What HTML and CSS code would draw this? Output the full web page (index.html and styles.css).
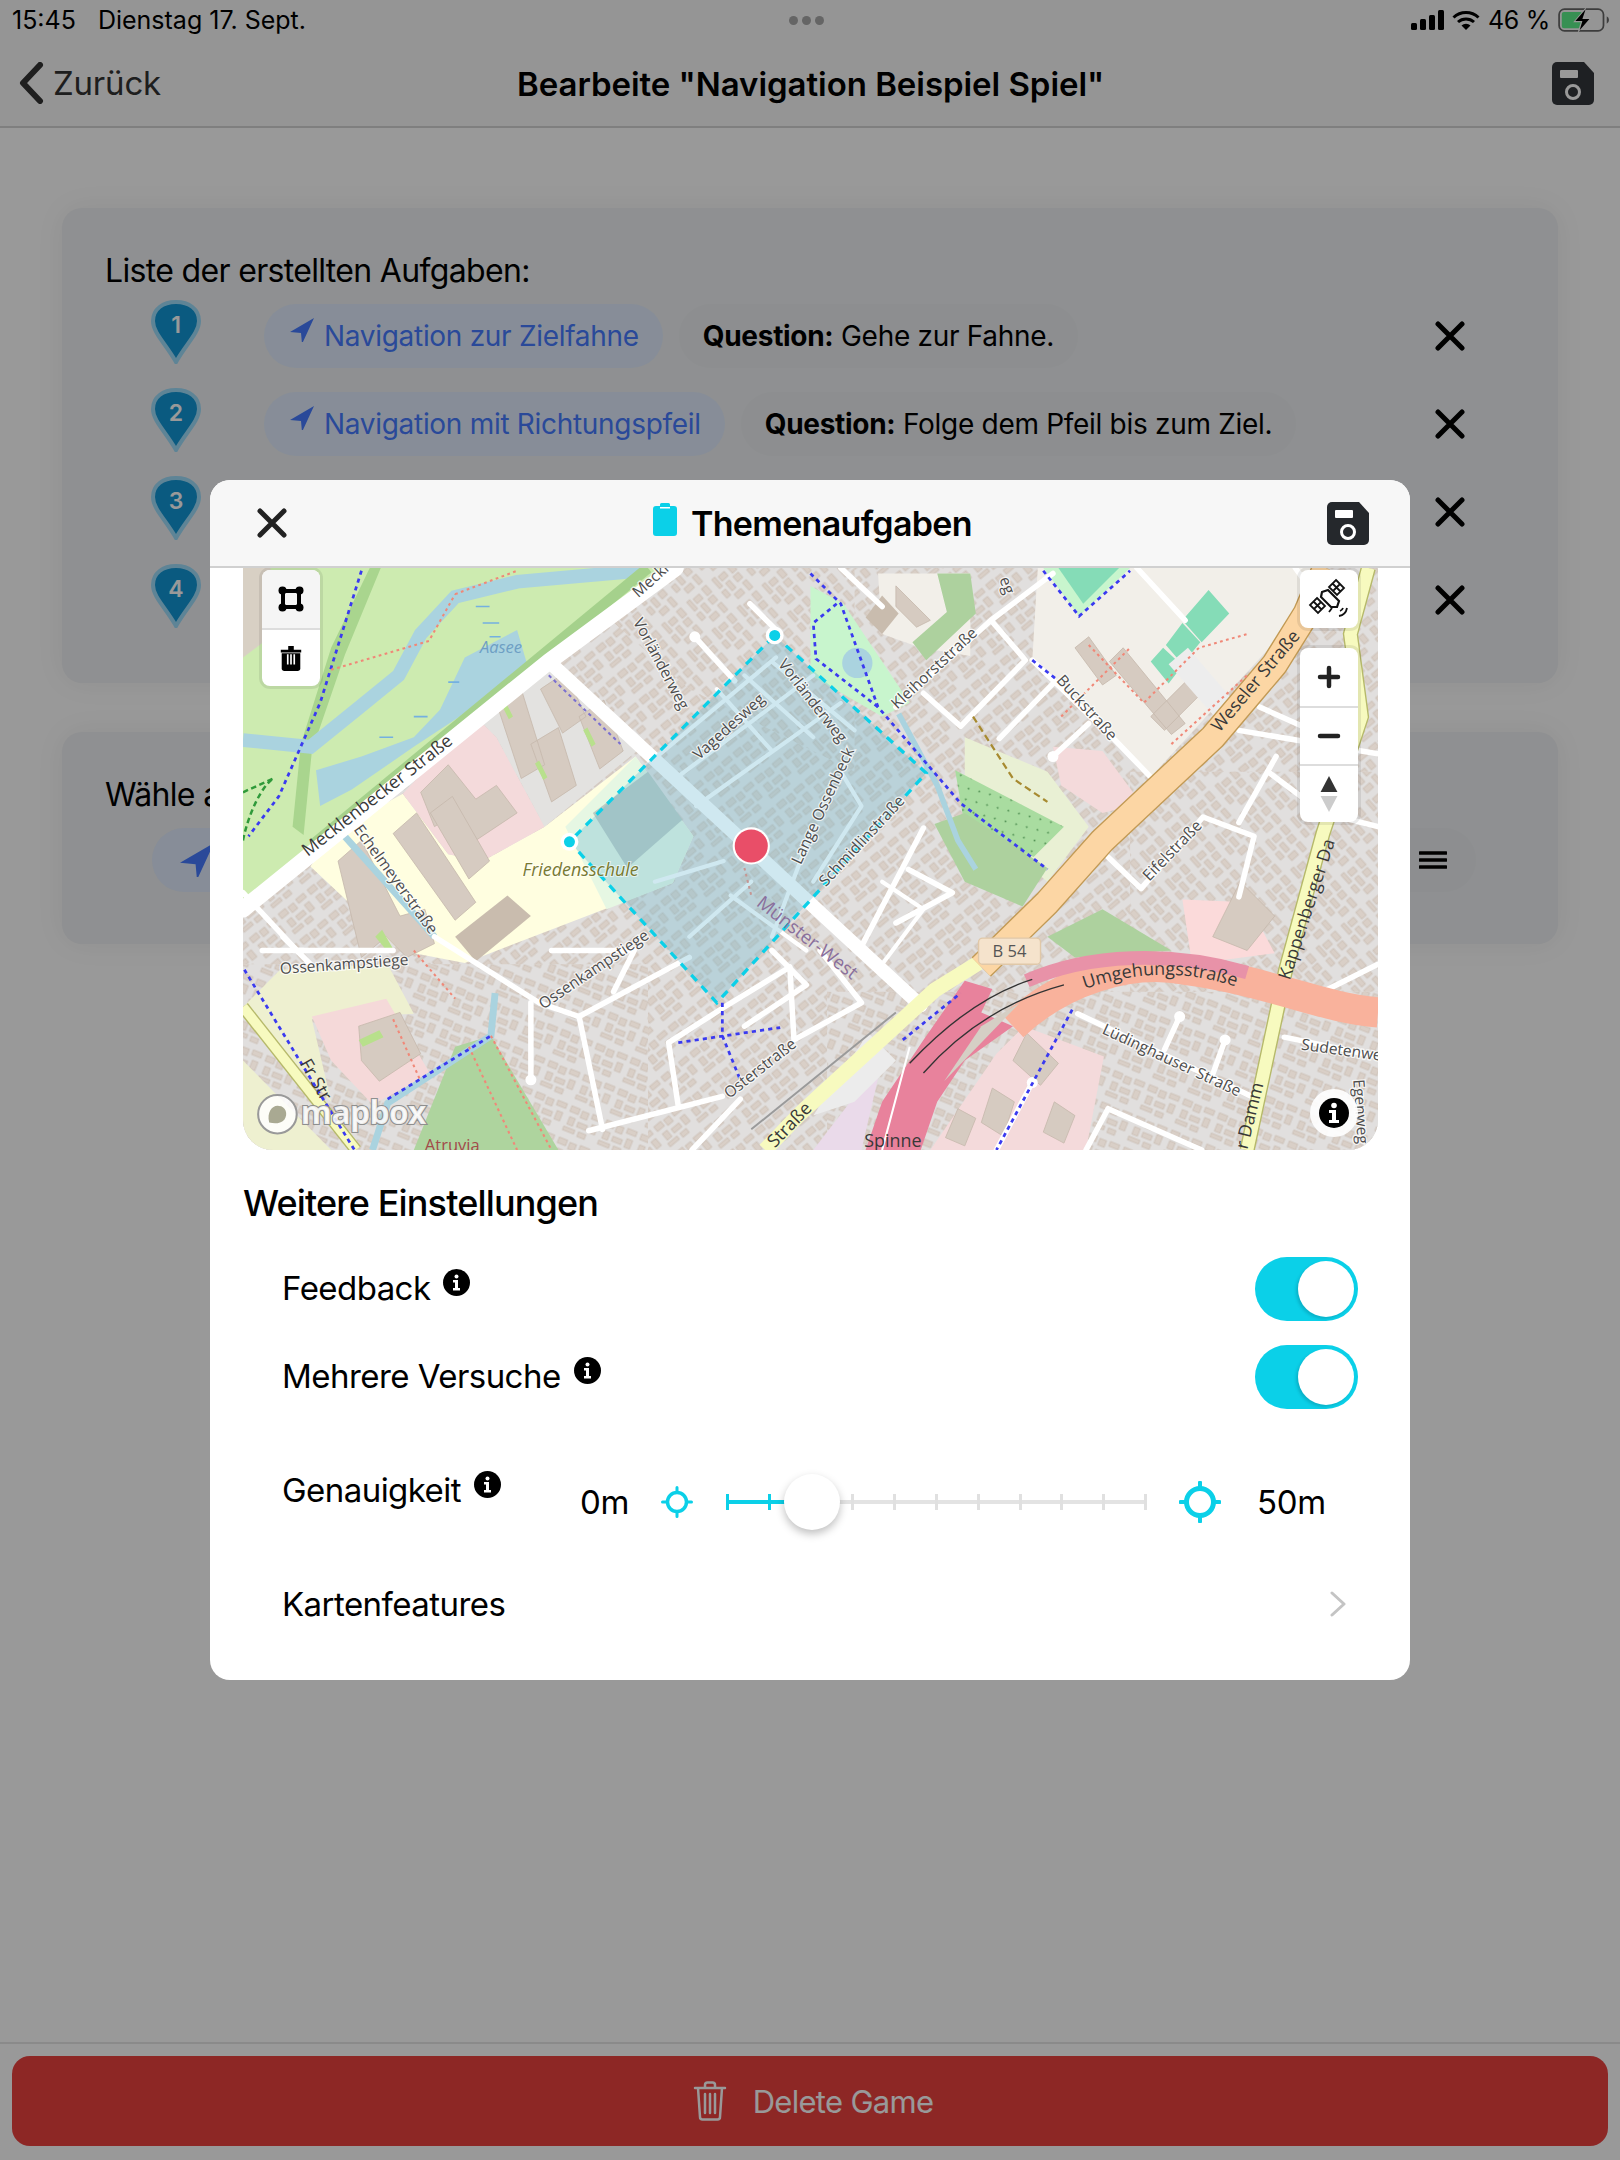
FILE: index.html
```html
<!DOCTYPE html>
<html lang="de">
<head>
<meta charset="utf-8">
<title>Bearbeite Spiel</title>
<link rel="stylesheet" href="styles.css">
</head>
<body>
<div class="app">
  <header class="status">
    <div class="status-left"><span>15:45</span><span>Dienstag 17. Sept.</span></div>
    <div class="dots"><i></i><i></i><i></i></div>
    <div class="status-right">
      <svg class="sig" viewBox="0 0 33 20"><rect x="0" y="13" width="6" height="7" rx="1.5"/><rect x="9" y="9" width="6" height="11" rx="1.5"/><rect x="18" y="5" width="6" height="15" rx="1.5"/><rect x="27" y="0" width="6" height="20" rx="1.5"/></svg>
      <svg class="wifi" viewBox="0 0 28 20"><path d="M1.5 7.5a18 18 0 0 1 25 0" fill="none" stroke="#000" stroke-width="3"/><path d="M6 12a12 12 0 0 1 16 0" fill="none" stroke="#000" stroke-width="3"/><path d="M14 20l-4.5-4.5a6.4 6.4 0 0 1 9 0z"/></svg>
      <span class="pct">46 %</span>
      <svg class="batt" viewBox="0 0 48 24"><rect x="1" y="2" width="41" height="20" rx="5" fill="none" stroke="#666" stroke-width="1.6"/><rect x="3.5" y="4.5" width="19" height="15" rx="2" fill="#5cf08a"/><path d="M45 8.500a4 4 0 0 1 0 7z" fill="#666"/><path d="M26 0L14 14h7l-3 10L31 10h-7z" fill="#fff"/><path d="M25.500 2L16 13h6.500l-2.500 8.500L29 11h-6.500z"/></svg>
    </div>
  </header>
  <nav class="nav">
    <div class="back">
      <svg class="back-ico" viewBox="0 0 26 42"><path d="M22 3L5 21l17 18" fill="none" stroke="#333" stroke-width="6" stroke-linecap="round" stroke-linejoin="round"/></svg>
      <span>Zurück</span>
    </div>
    <h1 class="nav-title">Bearbeite "Navigation Beispiel Spiel"</h1>
    <svg class="save nav-save" viewBox="0 0 42 43"><path d="M5 0h27l10 11v27a5 5 0 0 1-5 5H5a5 5 0 0 1-5-5V5a5 5 0 0 1 5-5z" fill="#33363b"/><rect x="8" y="8" width="18" height="8" rx="1" fill="#fff"/><circle cx="21" cy="30" r="6.500" fill="none" stroke="#fff" stroke-width="3"/></svg>
  </nav>

  <main class="main">
    <section class="card card-list">
      <h2 class="card-title">Liste der erstellten Aufgaben:</h2>
      <div class="row">
        <svg class="pin" viewBox="0 0 50 64"><path d="M25 62C15 44 2 33 2 21C2 9 12 2 25 2s23 7 23 19c0 12-13 23-23 41z" fill="#1196d5" stroke="#9ddcfa" stroke-width="4"/><text x="25" y="33" class="pin-num">1</text></svg>
        <div class="chips">
          <span class="chip chip-type"><svg class="nav-arrow" viewBox="0 0 24 24"><path d="M24 0L0 14l11 1 1 11z"/></svg>Navigation zur Zielfahne</span>
          <span class="chip chip-q"><b>Question:</b> Gehe zur Fahne.</span>
        </div>
        <svg class="x" viewBox="0 0 30 30"><path d="M3 3l24 24M27 3L3 27" stroke="#000" stroke-width="5" stroke-linecap="round"/></svg>
      </div>
      <div class="row">
        <svg class="pin" viewBox="0 0 50 64"><path d="M25 62C15 44 2 33 2 21C2 9 12 2 25 2s23 7 23 19c0 12-13 23-23 41z" fill="#1196d5" stroke="#9ddcfa" stroke-width="4"/><text x="25" y="33" class="pin-num">2</text></svg>
        <div class="chips">
          <span class="chip chip-type"><svg class="nav-arrow" viewBox="0 0 24 24"><path d="M24 0L0 14l11 1 1 11z"/></svg>Navigation mit Richtungspfeil</span>
          <span class="chip chip-q"><b>Question:</b> Folge dem Pfeil bis zum Ziel.</span>
        </div>
        <svg class="x" viewBox="0 0 30 30"><path d="M3 3l24 24M27 3L3 27" stroke="#000" stroke-width="5" stroke-linecap="round"/></svg>
      </div>
      <div class="row">
        <svg class="pin" viewBox="0 0 50 64"><path d="M25 62C15 44 2 33 2 21C2 9 12 2 25 2s23 7 23 19c0 12-13 23-23 41z" fill="#1196d5" stroke="#9ddcfa" stroke-width="4"/><text x="25" y="33" class="pin-num">3</text></svg>
        <div class="chips"></div>
        <svg class="x" viewBox="0 0 30 30"><path d="M3 3l24 24M27 3L3 27" stroke="#000" stroke-width="5" stroke-linecap="round"/></svg>
      </div>
      <div class="row">
        <svg class="pin" viewBox="0 0 50 64"><path d="M25 62C15 44 2 33 2 21C2 9 12 2 25 2s23 7 23 19c0 12-13 23-23 41z" fill="#1196d5" stroke="#9ddcfa" stroke-width="4"/><text x="25" y="33" class="pin-num">4</text></svg>
        <div class="chips"></div>
        <svg class="x" viewBox="0 0 30 30"><path d="M3 3l24 24M27 3L3 27" stroke="#000" stroke-width="5" stroke-linecap="round"/></svg>
      </div>
    </section>

    <section class="card card-choose">
      <h2 class="card-title">Wähle aus</h2>
      <div class="pick">
        <svg class="pick-arrow" viewBox="0 0 24 24"><path d="M24 0L0 14l11 1 1 11z"/></svg>
        <svg class="burger" viewBox="0 0 28 18"><path d="M1 2h26M1 9h26M1 16h26" stroke="#000" stroke-width="3.400" stroke-linecap="round"/></svg>
      </div>
    </section>
  </main>

  <footer class="footer">
    <button class="delete">
      <svg class="trash-ico" viewBox="0 0 34 40"><path d="M2 7h30M12 7V4a2.500 2.500 0 0 1 2.500-2.500h5A2.500 2.500 0 0 1 22 4v3M5 7l2 29a2.500 2.500 0 0 0 2.500 2.500h15A2.500 2.500 0 0 0 27 36l2-29M12 13v19M17 13v19M22 13v19" fill="none" stroke="#fff" stroke-width="2.500" stroke-linecap="round"/></svg>
      <span>Delete Game</span>
    </button>
  </footer>

  <div class="overlay">
    <div class="modal">
      <div class="modal-head">
        <svg class="x modal-x" viewBox="0 0 30 30"><path d="M3 3l24 24M27 3L3 27" stroke="#222" stroke-width="5" stroke-linecap="round"/></svg>
        <div class="modal-title">
          <svg class="clip-ico" viewBox="0 0 24 33"><path d="M3 3h4V1.500A1.500 1.500 0 0 1 8.500 0h7A1.500 1.500 0 0 1 17 1.500V3h4a3 3 0 0 1 3 3v24a3 3 0 0 1-3 3H3a3 3 0 0 1-3-3V6a3 3 0 0 1 3-3z" fill="#0bd0e8"/><rect x="7" y="4" width="10" height="1.500" fill="#fff"/></svg>
          <span>Themenaufgaben</span>
        </div>
        <svg class="save" viewBox="0 0 42 43"><path d="M5 0h27l10 11v27a5 5 0 0 1-5 5H5a5 5 0 0 1-5-5V5a5 5 0 0 1 5-5z" fill="#25282c"/><rect x="8" y="8" width="18" height="8" rx="1" fill="#fff"/><circle cx="21" cy="30" r="6.500" fill="none" stroke="#fff" stroke-width="3"/></svg>
      </div>

      <div class="map">
        <svg class="map-art" viewBox="176 412 824 423" preserveAspectRatio="none">
          <defs>
            <g id="blocks" fill="#d9cfc7" stroke="#cabeb4" stroke-width=".8">
              <rect x="2" y="2" width="9" height="6"/><rect x="14" y="3" width="7" height="7"/><rect x="25" y="2" width="10" height="5"/>
              <rect x="4" y="13" width="6" height="8"/><rect x="14" y="15" width="10" height="5"/><rect x="28" y="12" width="6" height="9"/>
              <rect x="2" y="24" width="12" height="4"/><rect x="18" y="24" width="8" height="5"/>
            </g>
            <pattern id="b1" width="38" height="34" patternUnits="userSpaceOnUse" patternTransform="rotate(-40) scale(.72)"><use href="#blocks"/></pattern>
            <pattern id="b2" width="38" height="34" patternUnits="userSpaceOnUse" patternTransform="rotate(22) scale(.72)"><use href="#blocks"/></pattern>
            <pattern id="b3" width="38" height="34" patternUnits="userSpaceOnUse" patternTransform="rotate(48) scale(.72)"><use href="#blocks"/></pattern>
            <pattern id="dots" width="8" height="8" patternUnits="userSpaceOnUse" patternTransform="rotate(15)">
              <rect width="8" height="8" fill="#a9dca0"/><circle cx="3" cy="3" r=".7" fill="#4f8f52"/>
            </pattern>
            <path id="umg" d="M787 718 Q850 696 909 721"/>
          </defs>

          <rect x="176" y="412" width="824" height="423" fill="#e1dfde"/>
          <rect x="176" y="412" width="824" height="423" fill="url(#b1)"/>
          <path d="M176 700H470V835H176zM600 720H1000V835H600z" fill="#e1dfde"/>
          <path d="M176 700H470V835H176zM600 720H1000V835H600z" fill="url(#b2)"/>
          <path d="M400 412H620V560L500 500zM820 560H1000V720H820z" fill="#e1dfde"/>
          <path d="M400 412H620V560L500 500zM820 560H1000V720H820z" fill="url(#b3)"/>

          <!-- land use -->
          <path d="M176 412H490L398 480L176 662z" fill="#cdebb0"/>
          <path d="M176 412h20v50l-20 15z" fill="#d8d0c4"/>
          <path d="M268 412L240 470L218 540L212 600L220 606L226 545L250 475L276 412z" fill="#a9d58e"/>
          <path d="M225 629L240 605L292 576L325 620L350 625L395 600L461 549L503 607L488 641L337 699L290 690z" fill="#fffee0"/>
          <path d="M292 576L345 520L360 535L395 600L350 625L325 620z" fill="#f4dadb"/>
          <path d="M345 520L398 482L462 545L395 600L360 535z" fill="#e3e2e0"/>
          <path d="M461 549L503 607L488 641L440 660L410 600z" fill="#e6f7e3"/>
          <path d="M203 704L281 700L300 736L226 740L240 800L176 731z" fill="#eef0d0"/>
          <path d="M226 738L280 725L312 780L270 802L240 770z" fill="#f5d9d9"/>
          <path d="M176 770L240 835H176z" fill="#eef0d0"/>
          <path d="M330 760L356 752L405 835H300z" fill="#aed49e"/>
          <path d="M753 412L749 479L835 564L944 445L955 412z" fill="#f2efe9"/>
          <path d="M757 412H820L783 447z" fill="#c8f5cd"/>
          <path d="M768 412H812L786 438z" fill="#85dcb7"/>
          <path d="M877 428L892 445L872 466L858 450zM858 452L871 466L858 482L846 468zM844 470L858 483L848 496L835 480z" fill="#85dcb7"/>
          <path d="M637 416H704V476L668 470L640 460z" fill="#f2efe9"/>
          <path d="M680 416H704L708 445L672 479L662 466L687 444z" fill="#add19e"/>
          <path d="M640 432L652 445L640 460L628 448z" fill="#c9bcae"/>
          <path d="M588 425L612 438L660 510L640 520L588 490z" fill="#c8f5cd"/>
          <circle cx="622" cy="481" r="11" fill="#aad3df"/>
          <path d="M700 535L760 560L790 600L760 640L700 590z" fill="#e9f0d4"/>
          <path d="M693 559L772 600L750 622L700 600z" fill="url(#dots)"/>
          <path d="M678 598L700 590L760 630L742 658L700 640z" fill="#add19e"/>
          <path d="M764 542L800 545L828 583L800 590L770 570z" fill="#f4dadb"/>
          <path d="M858 653L905 655L925 692L865 700z" fill="#fbdada"/>
          <path d="M800 660L850 690L780 695L760 680z" fill="#add19e"/>
          <path d="M743 745L801 767L788 835H675L723 765z" fill="#f4dadb"/>
          <path d="M590 835L640 770L625 835z" fill="#eadaea"/>
          <path d="M630 750L650 770L620 800L590 810z" fill="#ececec"/>

          <!-- buildings -->
          <g fill="#d6cbc1" stroke="#c6b9ad" stroke-width=".6">
            <path d="M360 510L378 500L395 555L378 565zM385 540L405 528L418 570L400 582zM420 520L438 508L452 545L435 558zM392 500L410 488L425 520L408 532z"/>
            <path d="M305 575L325 555L345 580L360 570L375 590L345 610L330 590L315 600z"/>
            <path d="M245 625L262 610L290 665L308 660L315 685L295 695L280 680L262 695z"/>
            <path d="M285 605L302 590L345 655L330 668zM312 590L328 578L355 625L340 638z"/>
            <path d="M790 462L810 490L800 497L780 470zM815 470L860 525L850 533L805 480zM835 520L865 490L875 500L845 530z"/>
            <path d="M900 640L925 665L905 690L880 680z"/>
            <path d="M745 750L768 772L755 788L735 770zM720 790L736 800L728 825L712 815zM765 800L780 810L772 830L757 822zM695 805L708 812L700 832L686 826z"/>
            <path d="M260 745L290 735L305 765L275 785L262 770z"/>
            <path d="M650 440L665 455L675 450L650 425z"/>
          </g>
          <path d="M862 470L905 520L890 530L848 482z" fill="#ededed"/>
          <path d="M430 590L470 560L495 595L455 630z" fill="#bccbc3"/>
          <path d="M330 680L368 650L385 665L345 698z" fill="#c9bcae"/>
          <path d="M366 508l6 12 -3 2 -6-12zM391 552l6 12-3 2-6-12zM426 528l6 12-3 2-6-12zM272 680l5-5 8 14-3 3zM260 755l15-7 3 5-15 7z" fill="#b8e08c"/>

          <!-- water -->
          <path d="M176 537L225 542L262 512L289 490L305 460L330 433L375 422L465 414" fill="none" stroke="#aad3df" stroke-width="10"/>
          <path d="M232 585L229 559L262 549L300 535L319 515L337 477L375 457L382 481L356 505L300 542L255 573z" fill="#aad3df"/>
          <path d="M345 440h10M350 452h12M355 462h8M300 520h10M275 535h10M325 495h8" stroke="#74b0e0" stroke-width="1.200" fill="none"/>
          <path d="M470 412L228 612" stroke="#a5d18c" stroke-width="8" fill="none"/>
          <path d="M652 518L680 570L695 610L708 631" stroke="#aad3df" stroke-width="4" fill="none"/>
          <path d="M248 605L315 680M359 721L356 752L281 801L270 835" stroke="#aad3df" stroke-width="5" fill="none"/>

          <!-- streets -->
          <g fill="none" stroke="#fff" stroke-linecap="round" stroke-linejoin="round">
            <path d="M176 660L398 480L490 412" stroke-width="12"/>
            <path d="M398 480L668 730" stroke-width="10"/>
            <g stroke-width="4">
              <path d="M176 648L215 690L285 690"/>
              <path d="M315 680L391 728L420 738L500 695"/>
              <path d="M385 728L385 784M420 738L437 820M427 821L524 796M485 757L492 803M485 757L524 732L573 702M573 702L576 755L625 728L595 690M537 798L502 835"/>
              <path d="M782 736L908 796M804 805L872 835M804 805L788 835M856 738L845 762M889 755L880 780M749 786L723 835M932 753L1000 767"/>
              <path d="M804 622L828 645L873 593L910 607L899 651M899 597L926 549M899 530L1000 547M914 513L963 535"/>
              <path d="M835 564L809 537L749 479"/>
              <path d="M650 513L719 450L764 416M719 450L744 479L697 527L670 503M764 496L725 536M790 525L764 549"/>
              <path d="M670 601L625 687M659 631L691 648L650 670M504 462L533 494M544 438L563 457"/>
              <path d="M610 412L640 440M825 412L860 450M940 412L960 440"/>
              <path d="M190 690h30M205 680l20 20"/>
              <path d="M400 690L460 690L445 720M560 690L585 715L540 745"/>
              <path d="M960 720L1000 700M920 560L960 590L1000 600"/>
            </g>
            <g stroke-width="3">
              <path d="M473 552L563 477M490 565L590 490M505 585L610 510M520 500L560 545M540 490L590 535M560 480L620 530"/>
              <path d="M500 680L545 640M475 640L525 625M590 600L560 680M610 560L625 585L590 640M530 650L585 690"/>
              <path d="M640 640L670 660L640 700"/>
            </g>
            <circle cx="385" cy="784" r="4" fill="#fff" stroke="none"/>
            <circle cx="764" cy="549" r="4" fill="#fff" stroke="none"/>
            <circle cx="504" cy="462" r="4" fill="#fff" stroke="none"/>
            <circle cx="856" cy="738" r="4" fill="#fff" stroke="none"/>
            <circle cx="889" cy="755" r="4" fill="#fff" stroke="none"/>
            <circle cx="749" cy="786" r="4" fill="#fff" stroke="none"/>
          </g>

          <!-- major roads -->
          <path d="M993 412L980 460L988 520L960 605L933 704L905 835" stroke="#b6b96a" stroke-width="11" fill="none"/>
          <path d="M993 412L980 460L988 520L960 605L933 704L905 835" stroke="#f7fabf" stroke-width="9" fill="none"/>
          <path d="M710 699L678 719L581 808L555 835" stroke="#f7fabf" stroke-width="11" fill="none"/>
          <path d="M545 820L650 735" stroke="#9a9a9a" stroke-width="1.400" fill="none"/>
          <path d="M176 731L258 835" stroke="#b6b96a" stroke-width="9" fill="none"/>
          <path d="M176 731L258 835" stroke="#f7fabf" stroke-width="7" fill="none"/>
          <path d="M712 702L760 655L800 610L880 535L925 482L948 445L962 412" stroke="#c29a55" stroke-width="20" stroke-linejoin="round" fill="none"/>
          <path d="M712 702L760 655L800 610L880 535L925 482L948 445L962 412" stroke="#fcd6a4" stroke-width="18" stroke-linejoin="round" fill="none"/>
          <path d="M700 712L720 718L712 735L735 745L700 770L680 800L668 835H628L640 800L670 755z" fill="#e8829c"/>
          <path d="M735 745C770 712 820 696 860 704C920 712 960 732 1000 735" stroke="#f9b29c" stroke-width="22" fill="none"/>
          <path d="M745 712C790 692 850 690 905 706" stroke="#e892a8" stroke-width="10" fill="none"/>
          <path d="M660 772C690 740 720 720 749 711M670 779C700 745 735 725 772 715" stroke="#333" stroke-width="1" fill="none"/>
          <path d="M685 785L712 745L740 728z" fill="#d5cfc5"/>
          <path d="M660 760L640 835" stroke="#fff" stroke-width="1.500" fill="none"/>

          <!-- paths -->
          <g fill="none" stroke="#3a3af0" stroke-width="2" stroke-dasharray="3 3">
            <path d="M588 416L610 438L637 513L697 583L760 631"/>
            <path d="M749 479L768 494M757 414L783 447L820 414"/>
            <path d="M262 414L232 510L202 578L180 607"/>
            <path d="M177 704L239 806L257 835M281 798L356 752"/>
            <path d="M492 757L566 746M524 728L524 752L537 784"/>
            <path d="M778 733L723 835M655 755L697 721"/>
            <path d="M607 438L590 452L592 478L637 513"/>
          </g>
          <path d="M398 490L450 540" fill="none" stroke="#7a6fd0" stroke-width="1.500" stroke-dasharray="2.500 2.500"/>
          <path d="M176 575L198 565M176 610C180 590 190 570 198 565" fill="none" stroke="#2f9a3a" stroke-width="1.800" stroke-dasharray="4 2.500"/>
          <g fill="none" stroke="#f08878" stroke-width="1.500" stroke-dasharray="2 2.500">
            <path d="M330 431L375 414M240 486L311 465L330 431"/>
            <path d="M790 468L830 510L870 470L905 460M770 520L820 470M850 540L905 490"/>
            <path d="M356 752L400 835M340 760L375 835M285 740L305 785"/>
            <path d="M300 690L330 725M540 630L545 650"/>
          </g>
          <path d="M706 520L735 565L760 582" stroke="#a78a30" stroke-width="1.600" stroke-dasharray="5 3" fill="none"/>

          <!-- drawn zone -->
          <path class="zone" d="M562 461L672 561L520 728L413 611z"/>
          <circle cx="562" cy="461" r="6.500" fill="#fff"/><circle cx="562" cy="461" r="4" fill="#0bd0e8"/>
          <circle cx="413" cy="611" r="6.500" fill="#fff"/><circle cx="413" cy="611" r="4" fill="#0bd0e8"/>
          <circle cx="545" cy="614" r="13.500" fill="#fff"/><circle cx="545" cy="614" r="12" fill="#e94e68"/>

          <!-- labels -->
          <g class="lbl">
            <text transform="translate(463 434) rotate(-42)">Meckl</text>
            <text class="big" transform="translate(223 622) rotate(-38)">Mecklenbecker Straße</text>
            <text transform="translate(459 451) rotate(62)">Vorländerweg</text>
            <text transform="translate(564 482) rotate(52)">Vorländerweg</text>
            <text transform="translate(507 552) rotate(-42)">Vagedesweg</text>
            <text transform="translate(256 602) rotate(54)">Echelmeyerstraße</text>
            <text transform="translate(203 707) rotate(-4)">Ossenkampstiege</text>
            <text transform="translate(394 733) rotate(-34)">Ossenkampstiege</text>
            <text transform="translate(581 628) rotate(-65)">Lange Ossenbeck</text>
            <text transform="translate(599 644) rotate(-47)">Schmidlinstraße</text>
            <text transform="translate(651 515) rotate(-43)">Kleihorststraße</text>
            <text transform="translate(766 494) rotate(48)">Buckstraße</text>
            <text transform="translate(834 640) rotate(-46)">Eifelstraße</text>
            <text transform="translate(799 750) rotate(25)">Lüdinghauser Straße</text>
            <text transform="translate(944 762) rotate(8)">Sudetenweg</text>
            <text transform="translate(982 784) rotate(86)">Egenweg</text>
            <text transform="translate(529 798) rotate(-38)">Osterstraße</text>
            <text transform="translate(725 420) rotate(70)">eg</text>
            <text class="big" transform="translate(885 532) rotate(-50)">Weseler Straße</text>
            <text class="big" transform="translate(936 712) rotate(-72)">Kappenberger Da</text>
            <text class="big" transform="translate(905 835) rotate(-76)">r Damm</text>
            <text class="big" transform="translate(562 834) rotate(-46)">Straße</text>
            <text class="big" transform="translate(217 772) rotate(60)">Fr     Str</text>
            <text class="big"><textPath href="#umg">Umgehungsstraße</textPath></text>
            <text class="big" x="627" y="833">Spinne</text>
          </g>
          <text class="lbl-aasee" x="348" y="474">Aasee</text>
          <text class="lbl-school" x="379" y="636">Friedensschule</text>
          <text class="lbl-quarter" transform="translate(548 657) rotate(38)">Münster-West</text>
          <text class="lbl-poi" x="308" y="836">Atruvia</text>
          <rect x="710" y="681" width="45" height="19" rx="3" fill="#f5e3cc" stroke="#e0c8a8"/>
          <text class="lbl-shield" x="732.500" y="695">B 54</text>

          <!-- mapbox logo -->
          <circle cx="201" cy="809" r="14" fill="#fff" fill-opacity=".85" stroke="#999" stroke-width="1.500"/>
          <path d="M195 815c-2-8 3-13 7-12c5 0 7 6 4 10c-3 3-7 3-11 2z" fill="#a9a992"/>
          <text class="logo-text" x="218" y="816">mapbox</text>
        </svg>

        <div class="ctl ctl-draw">
          <div class="ctl-cell ctl-grey">
            <svg class="ctl-ico" viewBox="0 0 26 26"><rect x="5" y="5" width="16" height="16" fill="none" stroke="#000" stroke-width="4"/><circle cx="4.500" cy="4.500" r="4"/><circle cx="21.500" cy="4.500" r="4"/><circle cx="4.500" cy="21.500" r="4"/><circle cx="21.500" cy="21.500" r="4"/></svg>
          </div>
          <div class="ctl-cell">
            <svg class="ctl-ico" viewBox="0 0 26 28"><path d="M2 5h22v3H2zM10 1h6v4h-6z"/><path d="M3 9h20v16a3 3 0 0 1-3 3H6a3 3 0 0 1-3-3z"/><path d="M9.500 10v11M13 10v11M16.500 10v11" stroke="#fff" stroke-width="1.800"/></svg>
          </div>
        </div>
        <div class="ctl ctl-sat">
          <svg class="sat-ico" viewBox="0 0 42 42">
            <g fill="none" stroke="#111" stroke-width="1.800">
              <path d="M28 2l8 8-7 7-8-8zM32 6l-7 7M24.500 5.500l8 8M9 20l8 8-7 7-8-8zM13 24l-7 7M5.500 23.500l8 8"/>
              <path d="M14 14l6-2 11 11-2 6-6 0L13 19z" fill="#fff" stroke-width="2.200"/>
              <path d="M24 30l-3 4M32 33a5 5 0 0 0 3-3M31 38a10 10 0 0 0 8-8"/>
            </g>
          </svg>
        </div>
        <div class="ctl ctl-zoom">
          <div class="ctl-cell"><svg class="ctl-ico" viewBox="0 0 26 26"><path d="M13 4v18M4 13h18" stroke="#222" stroke-width="4.500" stroke-linecap="round"/></svg></div>
          <div class="ctl-cell"><svg class="ctl-ico" viewBox="0 0 26 26"><path d="M4 13h18" stroke="#222" stroke-width="4.500" stroke-linecap="round"/></svg></div>
          <div class="ctl-cell"><svg class="ctl-ico" viewBox="0 0 20 38"><path d="M10 2l8 15H2z" fill="#333"/><path d="M10 36L2 21h16z" fill="#ccc"/></svg></div>
        </div>
        <div class="attrib"><svg class="attrib-ico" viewBox="0 0 32 32"><circle cx="16" cy="16" r="15"/><circle cx="16" cy="8.500" r="2.800" fill="#fff"/><path d="M11 13h7v10h3v3H11v-3h3v-7h-3z" fill="#fff"/></svg></div>
      </div>

      <div class="settings">
        <h3 class="settings-title">Weitere Einstellungen</h3>
        <div class="set-row">
          <span class="label">Feedback<svg class="info" viewBox="0 0 27 27"><circle cx="13.500" cy="13.500" r="13.500"/><circle cx="13.500" cy="7.500" r="2" fill="#fff"/><path d="M10 11h5v8h2v2.500H10V19h2v-5.500h-2z" fill="#fff"/></svg></span>
          <span class="toggle"><i></i></span>
        </div>
        <div class="set-row">
          <span class="label">Mehrere Versuche<svg class="info" viewBox="0 0 27 27"><circle cx="13.500" cy="13.500" r="13.500"/><circle cx="13.500" cy="7.500" r="2" fill="#fff"/><path d="M10 11h5v8h2v2.500H10V19h2v-5.500h-2z" fill="#fff"/></svg></span>
          <span class="toggle"><i></i></span>
        </div>
        <div class="acc-row">
          <span class="label acc-label">Genauigkeit<svg class="info" viewBox="0 0 27 27"><circle cx="13.500" cy="13.500" r="13.500"/><circle cx="13.500" cy="7.500" r="2" fill="#fff"/><path d="M10 11h5v8h2v2.500H10V19h2v-5.500h-2z" fill="#fff"/></svg></span>
          <span class="val val-min">0m</span>
          <svg class="target-s" viewBox="0 0 32 32"><circle cx="16" cy="16" r="9.500" fill="none" stroke="#0bd0e8" stroke-width="3.500"/><path d="M16 1.500v4M16 26.500v4M1.500 16h4M26.500 16h4" stroke="#0bd0e8" stroke-width="3" stroke-linecap="round"/></svg>
          <div class="slider">
            <div class="track"></div>
            <div class="fill"></div>
            <div class="ticks">
              <i class="on"></i><i class="on"></i><i></i><i></i><i></i><i></i><i></i><i></i><i></i><i></i><i></i>
            </div>
            <div class="thumb"></div>
          </div>
          <svg class="target-l" viewBox="0 0 42 42"><circle cx="21" cy="21" r="13.500" fill="none" stroke="#0bd0e8" stroke-width="5"/><path d="M21 1.500v5M21 35.500v5M1.500 21h5M35.500 21h5" stroke="#0bd0e8" stroke-width="4" stroke-linecap="round"/></svg>
          <span class="val val-max">50m</span>
        </div>
        <div class="link-row">
          <span class="label">Kartenfeatures</span>
          <svg class="chev" viewBox="0 0 16 26"><path d="M2 2l12 11L2 24" fill="none" stroke="#c4c4c4" stroke-width="3" stroke-linecap="round" stroke-linejoin="round"/></svg>
        </div>
      </div>
    </div>
  </div>
</div>
</body>
</html>
```

FILE: styles.css
```css
* { box-sizing: border-box; }
html, body { margin: 0; padding: 0; }
body { font-family: Inter, "Noto Sans", "Liberation Sans", sans-serif; color: #000; background: #fff; }
.app { position: relative; width: 1620px; height: 2160px; overflow: hidden; display: flex; flex-direction: column; background: #fff; }

.status { height: 40px; padding: 0 10px 0 12px; display: flex; align-items: center; justify-content: space-between; background: #f9f9f9; font-size: 25px; position: relative; white-space: nowrap; }
.status-left { display: flex; gap: 22px; }
.dots { position: absolute; left: 789px; top: 16px; display: flex; gap: 4px; }
.dots i { width: 9px; height: 9px; border-radius: 50%; background: #a8a8a8; }
.status-right { display: flex; align-items: center; gap: 8px; }
.sig { width: 33px; height: 20px; }
.wifi { width: 28px; height: 20px; }
.pct { width: 62px; letter-spacing: -.3px; }
.batt { width: 52px; height: 26px; }

.nav { height: 88px; display: flex; align-items: center; justify-content: space-between; padding: 0 26px 0 18px; background: #f9f9f9; border-bottom: 2px solid #d4d4d4; position: relative; }
.back { display: flex; align-items: center; gap: 9px; font-size: 33px; color: #333; letter-spacing: -.2px; }
.back-ico { width: 26px; height: 42px; }
.nav-title { position: absolute; left: 517px; top: 22px; margin: 0; font-size: 33px; line-height: 44px; font-weight: 600; white-space: nowrap; letter-spacing: -.05px; }
.save { width: 42px; height: 43px; flex: none; }

.main { flex: 1; padding: 80px 62px 0; display: flex; flex-direction: column; gap: 49px; }
.card { border-radius: 20px; background: #eef0f3; box-shadow: 0 0 30px rgba(0,0,0,.06); padding: 43px 0 0 43px; }
.card-list { height: 475px; }
.card-choose { height: 212px; }
.card-title { margin: 0 0 13px; font-size: 32px; line-height: 40px; font-weight: 400; letter-spacing: -.67px; }
.row { display: flex; align-items: center; height: 64px; margin-bottom: 24px; padding-left: 46px; padding-right: 93px; }
.pin { width: 50px; height: 64px; flex: none; margin-bottom: 8px; }
.pin-num { font-size: 23px; font-weight: 600; fill: #fff; text-anchor: middle; font-family: Inter, sans-serif; }
.chips { flex: 1; display: flex; gap: 16px; margin-left: 63px; }
.chip { height: 64px; border-radius: 32px; padding: 0 24px; display: inline-flex; align-items: center; font-size: 28px; white-space: pre; background: #ebedf0; letter-spacing: -.3px; }
.chip b { font-weight: 700; }
.chip-type { color: #467bff; background: #e1ecfd; }
.nav-arrow { width: 24px; height: 24px; margin: 0 10px 0 2px; fill: #467bff; position: relative; top: -6px; }
.x { width: 30px; height: 30px; flex: none; }

.pick { margin: 0 0 0 47px; width: 1324px; height: 64px; border-radius: 32px; background: #ebedf0; display: flex; align-items: center; justify-content: space-between; padding: 0 29px 0 28px; position: relative; }
.pick::before { content: ""; position: absolute; left: 0; top: 0; width: 300px; height: 64px; border-radius: 32px; background: #e1ecfd; }
.pick-arrow { width: 34px; height: 34px; fill: #467bff; position: relative; }
.burger { width: 28px; height: 18px; position: relative; }

.footer { height: 118px; border-top: 2px solid #e6e6e6; padding: 12px 12px 14px; }
.delete { width: 100%; height: 90px; border: 0; border-radius: 18px; background: #eb413f; color: #fff; display: flex; align-items: center; justify-content: center; gap: 26px; font: 400 31px Inter, sans-serif; letter-spacing: -.7px; padding: 0 0 0 6px; }
.trash-ico { width: 34px; height: 40px; }

.overlay { position: absolute; inset: 0; background: rgba(0,0,0,.4); display: flex; align-items: center; justify-content: center; }
.modal { width: 1200px; height: 1200px; background: #fff; border-radius: 20px; overflow: hidden; display: flex; flex-direction: column; }
.modal-head { height: 88px; flex: none; background: #f7f7f7; border-bottom: 2px solid #d0d0d0; display: flex; align-items: center; justify-content: space-between; padding: 0 41px 0 47px; position: relative; }
.modal-title { position: absolute; left: 443px; top: 21px; display: flex; align-items: center; gap: 14px; font-size: 34px; font-weight: 600; line-height: 46px; white-space: nowrap; letter-spacing: -.7px; }
.clip-ico { width: 24px; height: 33px; position: relative; top: -5px; }

.map { position: relative; height: 582px; flex: none; margin: 0 32px 0 33px; border-radius: 0 0 30px 30px; overflow: hidden; background: #e1dfde; }
.map-art { display: block; width: 100%; height: 100%; }
.zone { fill: rgba(105,185,208,.32); stroke: #0bd0e8; stroke-width: 2.400; stroke-dasharray: 6 5; }
.map text { font-family: "Open Sans", "Noto Sans", sans-serif; }
.lbl text { font-size: 11.300px; fill: #4c4c4c; paint-order: stroke; stroke: rgba(255,255,255,.75); stroke-width: 1.800px; }
.lbl text.big { font-size: 13px; fill: #383838; stroke: none; }
.lbl-aasee { font-size: 12px; font-style: italic; fill: #6e9fc4; }
.lbl-school { font-size: 13px; font-style: italic; fill: #787a32; paint-order: stroke; stroke: rgba(255,255,255,.6); stroke-width: 1.500px; }
.lbl-quarter { font-size: 13.500px; fill: #8a6f9c; }
.lbl-poi { font-size: 12px; fill: #a24a4a; }
.lbl-shield { font-size: 12px; fill: #555; text-anchor: middle; }
.logo-text { font-size: 23px; font-weight: 700; fill: #fff; fill-opacity: .85; stroke: #8f8f8f; stroke-width: 1.600px; paint-order: stroke; letter-spacing: -.4px; }

.ctl { position: absolute; background: #fff; border-radius: 8px; box-shadow: 0 0 0 3px rgba(0,0,0,.08); overflow: hidden; }
.ctl-draw { left: 19px; top: 2px; width: 58px; }
.ctl-sat { left: 1057px; top: 2px; width: 58px; height: 58px; display: flex; align-items: center; justify-content: center; }
.ctl-zoom { left: 1057px; top: 80px; width: 58px; }
.ctl-cell { height: 58px; display: flex; align-items: center; justify-content: center; border-top: 2px solid #ddd; }
.ctl-cell:first-child { border-top: 0; }
.ctl-grey { background: #f5f5f5; }
.ctl-ico { width: 26px; height: 26px; }
.ctl-zoom .ctl-cell:last-child .ctl-ico { height: 40px; }
.sat-ico { width: 42px; height: 42px; }
.attrib { position: absolute; right: 20px; bottom: 13px; width: 48px; height: 48px; border-radius: 50%; background: rgba(255,255,255,.9); display: flex; align-items: center; justify-content: center; }
.attrib-ico { width: 32px; height: 32px; }

.settings { flex: 1; display: flex; flex-direction: column; }
.settings-title { margin: 30px 0 31px 33px; font-size: 36px; line-height: 46px; font-weight: 500; letter-spacing: -.85px; }
.set-row { height: 64px; margin-bottom: 24px; display: flex; align-items: center; justify-content: space-between; padding: 0 52px 0 72px; }
.set-row .label { margin-bottom: 3px; }
.label { font-size: 33px; line-height: 44px; display: inline-flex; align-items: flex-start; white-space: nowrap; letter-spacing: -.55px; }
.info { width: 27px; height: 27px; margin: 3px 0 0 13px; flex: none; }
.toggle { width: 103px; height: 64px; border-radius: 32px; background: #0bd0e8; position: relative; display: block; }
.toggle i { position: absolute; right: 4px; top: 4px; width: 56px; height: 56px; border-radius: 50%; background: #fff; box-shadow: -2px 2px 3px rgba(0,60,80,.2); }
.acc-row { height: 70px; margin-top: 34px; padding-left: 72px; display: flex; align-items: center; position: relative; }
.acc-label { width: 298px; margin-bottom: 24px; }
.val { font-size: 33px; letter-spacing: -.3px; }
.val-min { width: 81px; }
.target-s { width: 32px; height: 32px; flex: none; }
.slider { position: relative; width: 421px; height: 60px; margin-left: 33px; }
.track { position: absolute; left: 0; right: 0; top: 28px; height: 4px; background: #e3e3e3; }
.fill { position: absolute; left: 0; width: 85px; top: 28px; height: 4px; background: #0bd0e8; }
.ticks { position: absolute; left: 0; right: 0; top: 22px; height: 16px; display: flex; justify-content: space-between; }
.ticks i { width: 3px; height: 16px; background: #e0e0e0; }
.ticks i.on { background: #0bd0e8; }
.thumb { position: absolute; left: 58px; top: 2px; width: 56px; height: 56px; border-radius: 50%; background: #fff; box-shadow: 0 4px 8px rgba(0,0,0,.25); }
.target-l { width: 42px; height: 42px; margin-left: 32px; flex: none; }
.val-max { margin-left: 36px; }
.link-row { height: 64px; margin-top: 35px; padding: 0 64px 0 72px; display: flex; align-items: center; justify-content: space-between; }
.chev { width: 16px; height: 26px; }
```
